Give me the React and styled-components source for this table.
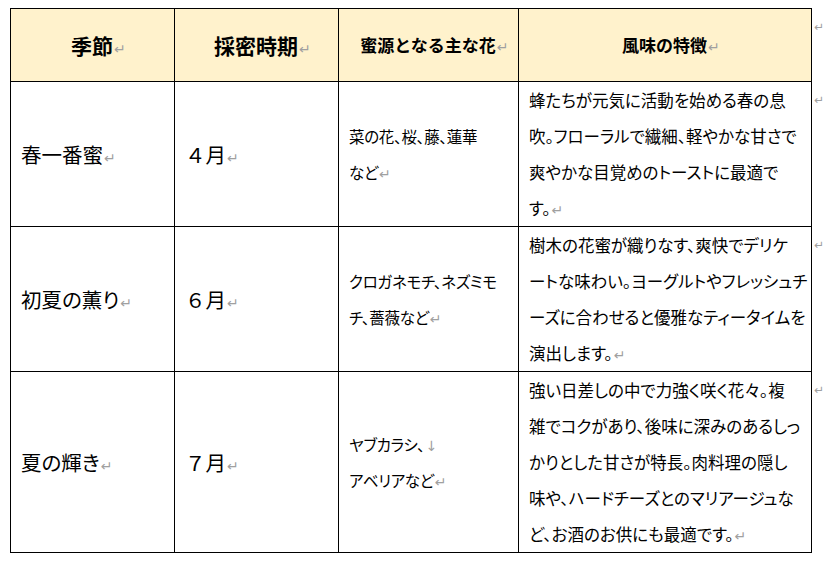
import React from "react";
import styled, { createGlobalStyle } from "styled-components";

const GlobalStyle = createGlobalStyle`
  html, body {
    margin: 0;
    padding: 0;
    background: #ffffff;
  }
  body {
    font-family: "Noto Sans CJK JP", "Noto Sans", sans-serif;
    color: #000;
  }
`;

const Page = styled.div`
  padding: 8px 0 0 10px;
  width: 823px;
  height: 562px;
  box-sizing: border-box;
  overflow: hidden;
`;

const Grid = styled.div`
  display: grid;
  grid-template-columns: 165px 164px 180px 293px 11px;
  grid-auto-rows: auto;
`;

const Cell = styled.div`
  box-sizing: border-box;
  display: flex;
  align-items: center;
  border-right: 1px solid #000;
  border-bottom: 1px solid #000;
  border-left: ${(p) => (p.$first ? "1px solid #000" : "none")};
  padding: 0 4px 0 10px;
  white-space: nowrap;
`;

const HeadCell = styled(Cell)`
  border-top: 1px solid #000;
  background: #fff2cc;
  min-height: 74px;
  justify-content: center;
  padding: 0;
  font-weight: 700;
  font-size: ${(p) => (p.$large ? "21px" : "17px")};
  line-height: 36px;
`;

const BodyCell = styled(Cell)`
  font-size: ${(p) => `${p.$size}px`};
  line-height: 36px;
  letter-spacing: ${(p) => (p.$tight ? "-0.3px" : "normal")};
  font-feature-settings: ${(p) => (p.$prop ? '"palt"' : "normal")};
`;

const Para = styled.div`
  display: block;
`;

const Mark = styled.span`
  display: inline-block;
  width: 0;
  overflow: visible;
  white-space: nowrap;
  font-family: "DejaVu Sans", sans-serif;
  font-weight: 400;
  font-size: 14px;
  line-height: 1;
  letter-spacing: normal;
  color: #a0a0a0;
  padding-left: 1px;
`;

const RowEnd = styled.div`
  font-family: "DejaVu Sans", sans-serif;
  font-size: 12px;
  line-height: 36px;
  color: #a0a0a0;
  padding-left: 2px;
  border-top: ${(p) => (p.$head ? "1px solid transparent" : "none")};
`;

const headers = [
  { label: "季節", large: true },
  { label: "採密時期", large: true },
  { label: "蜜源となる主な花", large: false },
  { label: "風味の特徴", large: false },
];

const rows = [
  {
    season: "春一番蜜",
    month: "４月",
    flowers: ["菜の花、桜、藤、蓮華", "など"],
    taste: [
      "蜂たちが元気に活動を始める春の息",
      "吹。フローラルで繊細、軽やかな甘さで",
      "爽やかな目覚めのトーストに最適で",
      "す。",
    ],
  },
  {
    season: "初夏の薫り",
    month: "６月",
    flowers: ["クロガネモチ、ネズミモ", "チ、薔薇など"],
    taste: [
      "樹木の花蜜が織りなす、爽快でデリケ",
      "ートな味わい。ヨーグルトやフレッシュチ",
      "ーズに合わせると優雅なティータイムを",
      "演出します。",
    ],
  },
  {
    season: "夏の輝き",
    month: "７月",
    flowers: ["ヤブカラシ、", "アベリアなど"],
    lineBreak: true,
    taste: [
      "強い日差しの中で力強く咲く花々。複",
      "雑でコクがあり、後味に深みのあるしっ",
      "かりとした甘さが特長。肉料理の隠し",
      "味や、ハードチーズとのマリアージュな",
      "ど、お酒のお供にも最適です。",
    ],
  },
];

function Lines({ lines, lineBreak }) {
  return (
    <Para>
      {lines.map((l, i) => {
        const last = i === lines.length - 1;
        return (
          <React.Fragment key={i}>
            {l}
            {last ? <Mark>↵</Mark> : lineBreak ? <Mark>↓</Mark> : null}
            {!last && <br />}
          </React.Fragment>
        );
      })}
    </Para>
  );
}

export default function App() {
  return (
    <>
      <GlobalStyle />
      <Page>
        <Grid>
          {headers.map((h, i) => (
            <HeadCell key={h.label} $first={i === 0} $large={h.large}>
              <span>
                {h.label}
                <Mark>↵</Mark>
              </span>
            </HeadCell>
          ))}
          <RowEnd $head>↵</RowEnd>
          {rows.map((r) => (
            <React.Fragment key={r.season}>
              <BodyCell $first $size={20.5} $prop>
                <span>
                  {r.season}
                  <Mark>↵</Mark>
                </span>
              </BodyCell>
              <BodyCell $size={20.5}>
                <span>
                  {r.month}
                  <Mark>↵</Mark>
                </span>
              </BodyCell>
              <BodyCell $size={15.5} $prop $tight>
                <Lines lines={r.flowers} lineBreak={r.lineBreak} />
              </BodyCell>
              <BodyCell $size={16.5} $prop>
                <Lines lines={r.taste} />
              </BodyCell>
              <RowEnd>↵</RowEnd>
            </React.Fragment>
          ))}
        </Grid>
      </Page>
    </>
  );
}
